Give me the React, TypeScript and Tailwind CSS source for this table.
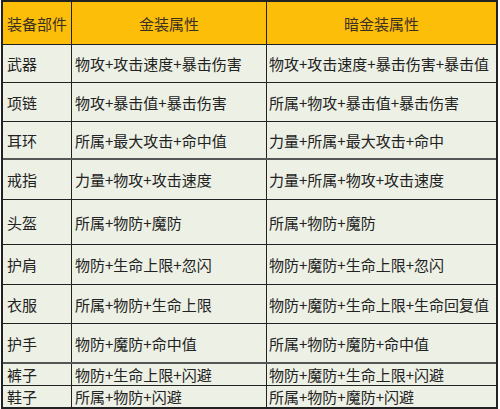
import React from "react";

const rows: { h: string; a: string; b: string; c: string; thick?: boolean }[] = [
  { h: "h-[38px]", a: "武器", b: "物攻+攻击速度+暴击伤害", c: "物攻+攻击速度+暴击伤害+暴击值" },
  { h: "h-[39px]", a: "项链", b: "物攻+暴击值+暴击伤害", c: "所属+物攻+暴击值+暴击伤害" },
  { h: "h-[38px]", a: "耳环", b: "所属+最大攻击+命中值", c: "力量+所属+最大攻击+命中", thick: true },
  { h: "h-[40px]", a: "戒指", b: "力量+物攻+攻击速度", c: "力量+所属+物攻+攻击速度" },
  { h: "h-[45px]", a: "头盔", b: "所属+物防+魔防", c: "所属+物防+魔防" },
  { h: "h-[40px]", a: "护肩", b: "物防+生命上限+忽闪", c: "物防+魔防+生命上限+忽闪" },
  { h: "h-[39px]", a: "衣服", b: "所属+物防+生命上限", c: "物防+魔防+生命上限+生命回复值" },
  { h: "h-[40px]", a: "护手", b: "物防+魔防+命中值", c: "所属+物防+魔防+命中值", thick: true },
  { h: "h-[22px]", a: "裤子", b: "物防+生命上限+闪避", c: "物防+魔防+生命上限+闪避" },
  { h: "h-[21px]", a: "鞋子", b: "所属+物防+闪避", c: "所属+物防+魔防+闪避" },
];

export default function App() {
  const font = { fontFamily: '"Noto Sans CJK SC", "Noto Sans", sans-serif' };
  return (
    <div className="w-[500px] h-[409px] bg-white" style={font}>
      <div className="ml-px w-[497px] h-[409px] border-2 border-[#222] bg-[#edf0e5] text-[15px] leading-none text-[#222]">
        <div className="grid grid-cols-[69px_195px_1fr] h-[43px] bg-[#fdbe0a] border-b border-[#222] text-[#3a3020]">
          <div className="flex items-center justify-center border-r border-[#222]">装备部件</div>
          <div className="flex items-center justify-center border-r border-[#222]">金装属性</div>
          <div className="flex items-center justify-center">暗金装属性</div>
        </div>
        {rows.map((r, i) => (
          <div
            key={i}
            className={`grid grid-cols-[69px_195px_1fr] ${r.h} ${
              i === rows.length - 1 ? "" : r.thick ? "border-b-2 border-[#555]" : "border-b border-[#222]"
            }`}
          >
            <div className="flex items-center pl-[4px] border-r border-[#222]">{r.a}</div>
            <div className="flex items-center pl-[3px] border-r border-[#222]">{r.b}</div>
            <div className="flex items-center pl-[2px]">{r.c}</div>
          </div>
        ))}
      </div>
    </div>
  );
}
